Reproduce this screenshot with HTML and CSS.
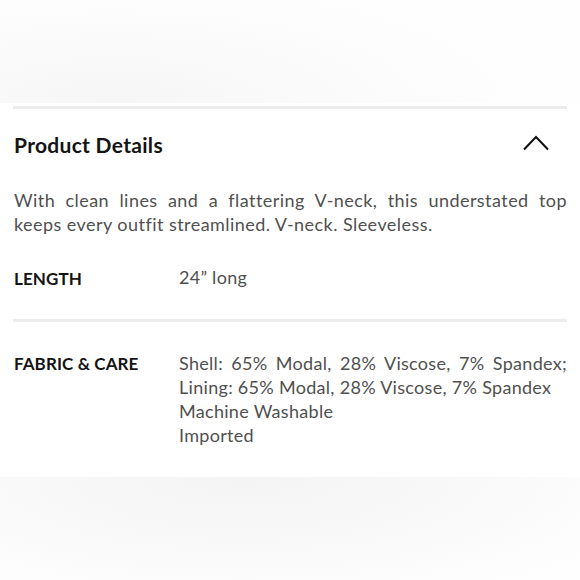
FILE: index.html
```html
<!DOCTYPE html>
<html>
<head>
<meta charset="utf-8">
<link rel="stylesheet" href="styles.css">
</head>
<body>
<div class="page">
  <div class="shade shade-top"></div>
  <section class="details">
    <hr class="rule">
    <div class="header">
      <h2 class="title">Product Details</h2>
      <svg class="chevron" width="26" height="16" viewBox="0 0 26 16"><path d="M1 14.5 L13 2 L25 14.5" fill="none" stroke="#111" stroke-width="2"/></svg>
    </div>
    <p class="desc">With clean lines and a flattering V-neck, this understated top keeps every outfit streamlined. V-neck. Sleeveless.</p>
    <div class="row row-length">
      <div class="label">LENGTH</div>
      <div class="value">24” long</div>
    </div>
    <hr class="rule">
    <div class="row row-fabric">
      <div class="label">FABRIC &amp; CARE</div>
      <div class="value">
        <div class="justify">Shell: 65% Modal, 28% Viscose, 7% Spandex;</div>
        <div>Lining: 65% Modal, 28% Viscose, 7% Spandex</div>
        <div>Machine Washable</div>
        <div>Imported</div>
      </div>
    </div>
  </section>
  <div class="shade shade-bottom"></div>
</div>
</body>
</html>
```
FILE: styles.css
```css
html, body { margin: 0; padding: 0; background: #fff; }
body { font-family: "Lato", "Noto Sans", sans-serif; width: 580px; height: 580px; overflow: hidden; }
.page { display: flex; flex-direction: column; height: 580px; }
.shade-top { height: 103px; background: radial-gradient(ellipse 70% 120% at 20% 100%, #f6f6f6 0%, #fbfbfb 60%, #fefefe 100%); flex: none; }
.shade-bottom { flex: 1; background: radial-gradient(ellipse 75% 130% at 42% 0%, #f4f4f4 0%, #f9f9f9 55%, #fefefe 100%); }
.details { padding: 3px 13px 0 13px; height: 374px; box-sizing: border-box; }
.rule { border: 0; height: 3px; background: #ececec; margin: 0; }
.header { display: flex; justify-content: space-between; align-items: center; padding: 0 18px 0 1px; height: 71px; }
.title { margin: 0; font-size: 21px; font-weight: 700; color: #141414; letter-spacing: 0.3px; }
.chevron { display: block; margin-top: -3px; }
.desc { margin: 8px 0 0 1px; font-size: 18px; line-height: 24px; color: #505050; text-align: justify; letter-spacing: 0.45px; }
.row { display: flex; padding-left: 1px; }
.label { width: 165px; flex: none; font-size: 17px; font-weight: 700; color: #141414; letter-spacing: 0.1px; }
.value { flex: 1; font-size: 18px; line-height: 24px; color: #505050; letter-spacing: 0.3px; }
.justify { text-align: justify; text-align-last: justify; }
.row-length { margin-top: 29px; height: 54px; align-items: flex-start; }
.row-length .label { padding-top: 3px; }
.row-fabric { margin-top: 29px; }
.row-fabric .label { padding-top: 2px; }
```
